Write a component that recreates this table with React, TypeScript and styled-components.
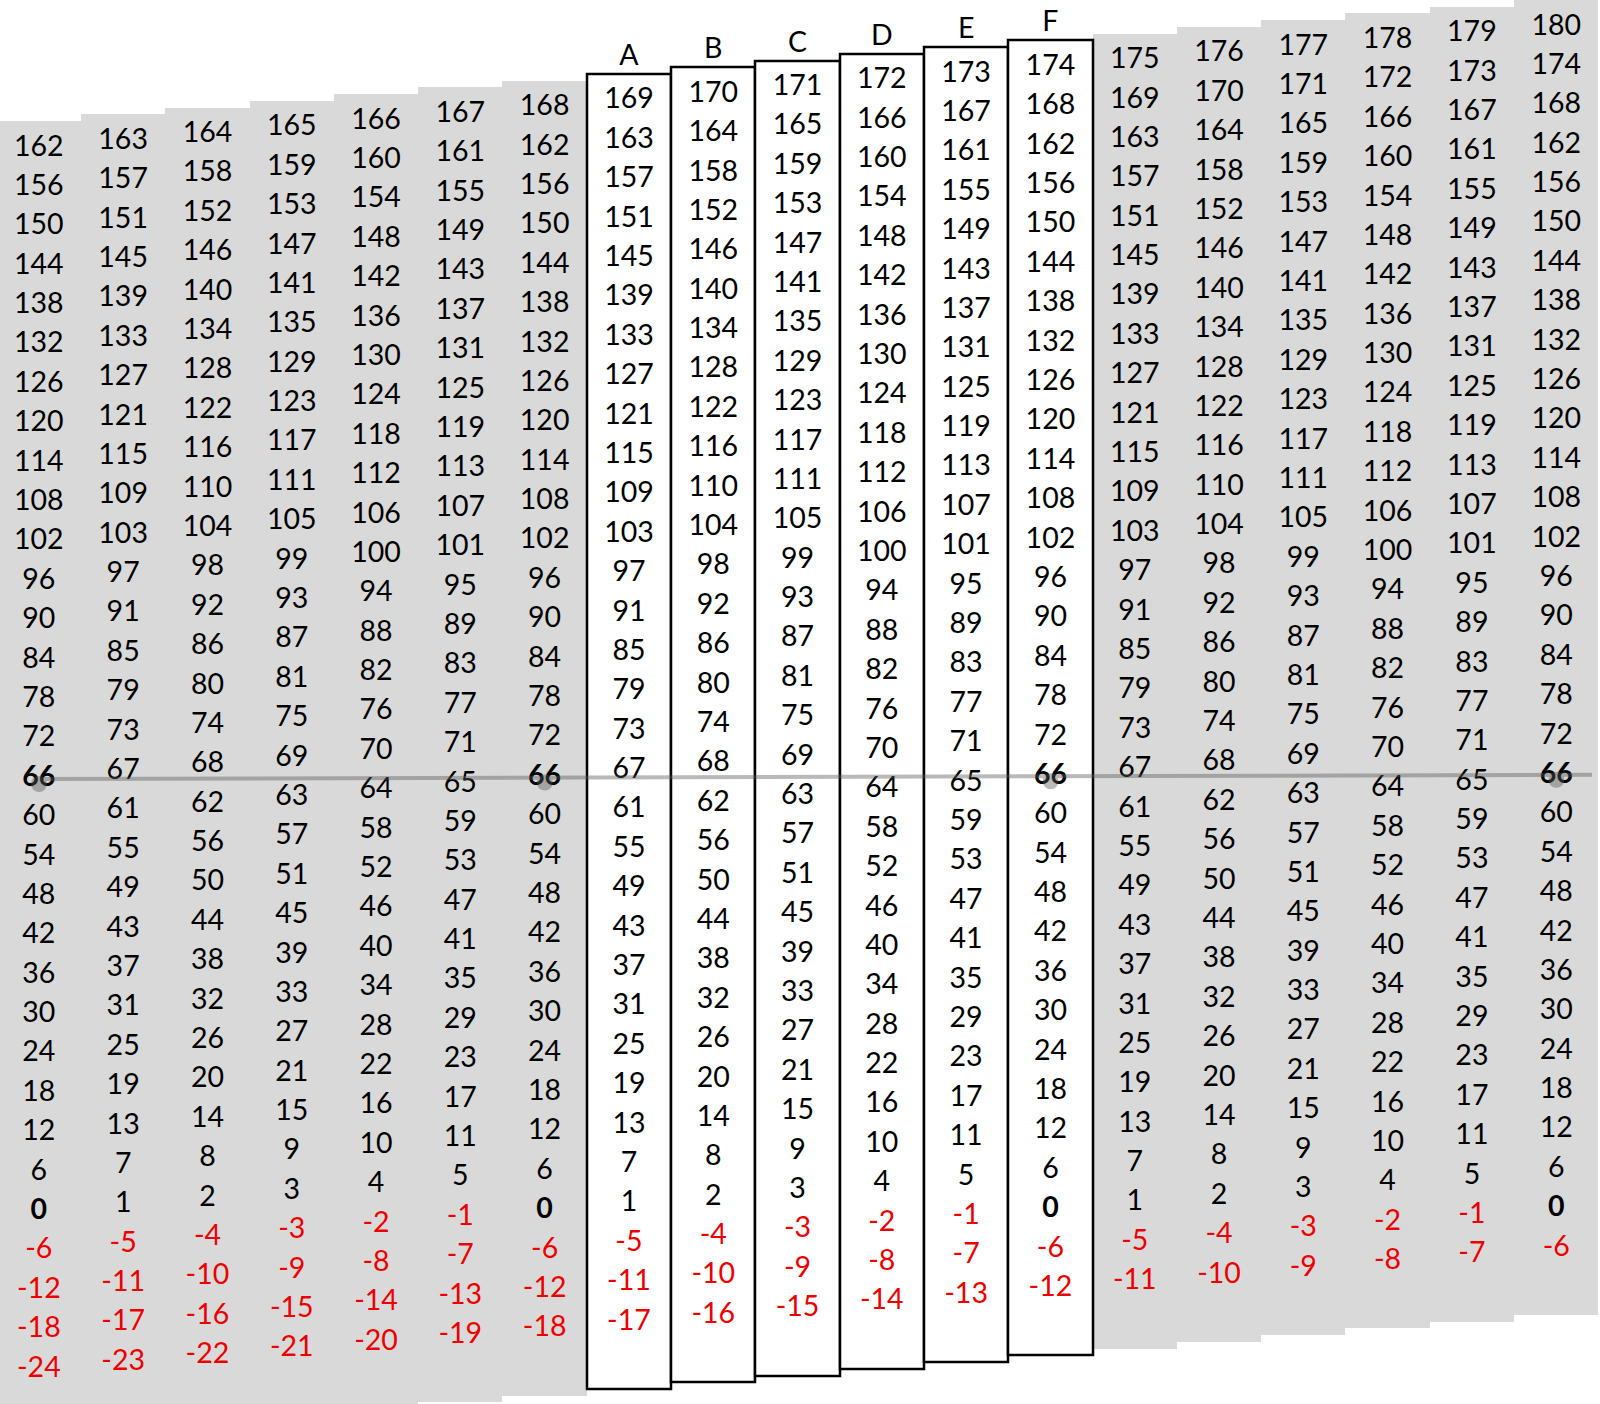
import styled, { createGlobalStyle, css } from "styled-components";

const GlobalStyle = createGlobalStyle`
  html, body {
    margin: 0;
    padding: 0;
    background: #ffffff;
  }
  body {
    font-family: Lato, "Open Sans", "Liberation Sans", sans-serif;
  }
`;

const COLUMN_COUNT = 19;
const ROW_COUNT = 32;
const COL_WIDTH = 84.3;
const ROW_HEIGHT = 39.4;
const STRIP_HEIGHT = 1315;
const FIRST_TOP = 121;
const COL_STEP = 6.72;
const LABEL_HEIGHT = 40;
const LETTERS = ["A", "B", "C", "D", "E", "F"];
const FIRST_BOXED = 7;

type Tone = "normal" | "bold" | "negative";

const Page = styled.div`
  position: relative;
  width: 1600px;
  height: 1404px;
  overflow: hidden;
  background: #ffffff;
`;

const Row = styled.div`
  display: flex;
  align-items: flex-start;
  margin-left: -3.3px;
`;

const Column = styled.div`
  flex: 0 0 ${COL_WIDTH}px;
  display: flex;
  flex-direction: column;
`;

const Label = styled.div`
  height: ${LABEL_HEIGHT}px;
  line-height: ${LABEL_HEIGHT}px;
  text-align: center;
  font-size: 28.5px;
  color: #000;
`;

const Strip = styled.div<{ $boxed: boolean }>`
  box-sizing: border-box;
  height: ${STRIP_HEIGHT}px;
  padding-top: 4.5px;
  background: #d9d9d9;

  ${(p) =>
    p.$boxed &&
    css`
      position: relative;
      z-index: 1;
      background: #ffffff;
      box-shadow: 0 0 0 1.25px #000, inset 0 0 0 1.25px #000;
    `}
`;

const Cell = styled.div<{ $tone: Tone }>`
  height: ${ROW_HEIGHT}px;
  line-height: ${ROW_HEIGHT}px;
  text-align: center;
  font-size: 28.5px;
  font-weight: ${(p) => (p.$tone === "bold" ? 700 : 400)};
  color: ${(p) => (p.$tone === "negative" ? "#ee0000" : "#000000")};
`;

const Overlay = styled.svg`
  position: absolute;
  left: 0;
  top: 0;
  z-index: 2;
  pointer-events: none;
`;

const toneOf = (value: number, col: number): Tone => {
  if (value < 0) return "negative";
  if ((value === 66 || value === 0) && col % 6 === 0) return "bold";
  return "normal";
};

// y of the 66 line at a given x (the chart is tilted a little)
const lineY = (x: number) => 779 - ((x - 39) * 4.2) / 1537;

const App = () => {
  const columns = Array.from({ length: COLUMN_COUNT }, (_, col) => {
    const first = 162 + col;
    const values = Array.from({ length: ROW_COUNT }, (_, k) => first - 6 * k);
    const letter = col >= FIRST_BOXED ? LETTERS[col - FIRST_BOXED] : undefined;
    const top = FIRST_TOP - COL_STEP * col;
    return { col, values, letter, top };
  });

  const dots = [0, 6, 12, 18].map((col) => 39 + COL_WIDTH * col);

  return (
    <>
      <GlobalStyle />
      <Page>
        <Row>
          {columns.map(({ col, values, letter, top }) => (
            <Column key={col} style={{ marginTop: letter ? top - LABEL_HEIGHT : top }}>
              {letter && <Label>{letter}</Label>}
              <Strip $boxed={!!letter}>
                {values.map((v) => (
                  <Cell key={v} $tone={toneOf(v, col)}>
                    {v}
                  </Cell>
                ))}
              </Strip>
            </Column>
          ))}
        </Row>

        <Overlay width={1600} height={1404} viewBox="0 0 1600 1404">
          <g opacity={0.42} fill="#5a5a5a" stroke="#5a5a5a">
            <line x1={39} y1={lineY(39)} x2={1592} y2={lineY(1592)} strokeWidth={4} />
            {dots.map((x) => (
              <circle key={x} cx={x} cy={lineY(x) + 5} r={8} stroke="none" />
            ))}
          </g>
        </Overlay>
      </Page>
    </>
  );
};

export default App;
